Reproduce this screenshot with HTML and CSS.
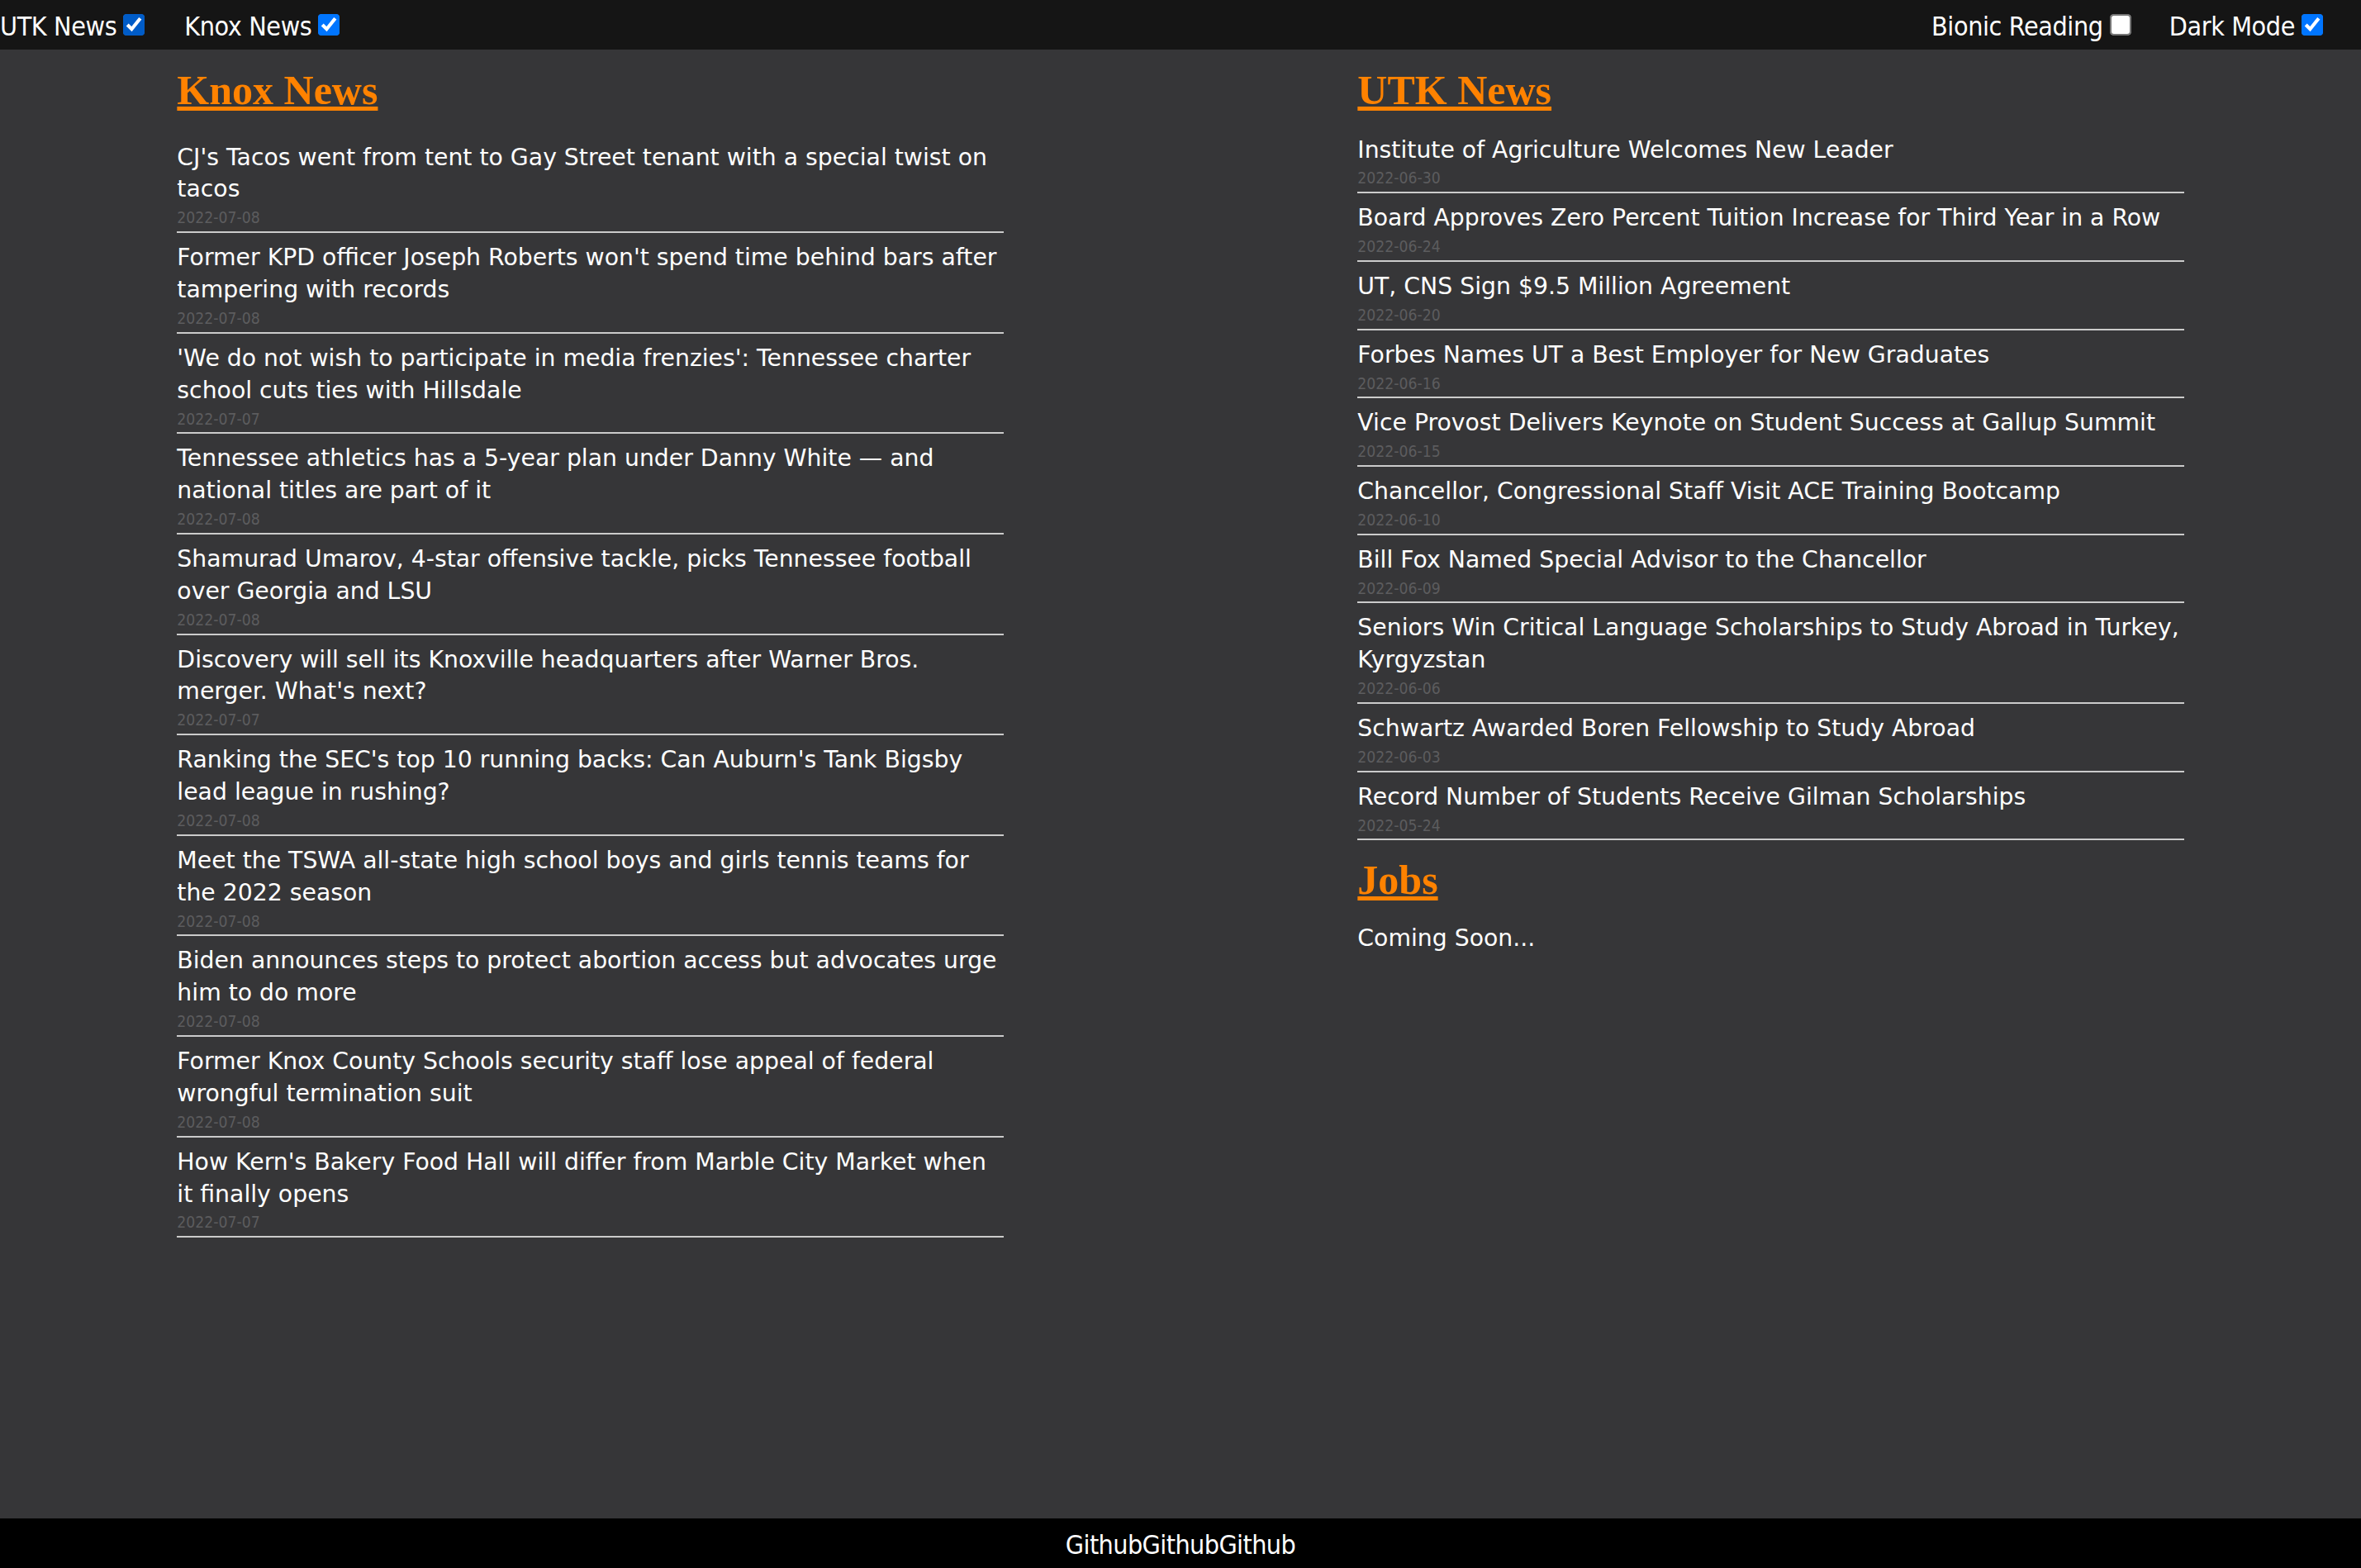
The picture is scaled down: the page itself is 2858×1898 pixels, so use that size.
FILE: index.html
```html
<!DOCTYPE html>
<html lang="en">
<head>
<meta charset="utf-8">
<title>Knoxville News</title>
<link rel="stylesheet" href="styles.css">
</head>
<body>
<nav class="topbar">
  <div class="toggles toggles-left">
    <label class="toggle"><span class="toggle-text">UTK News</span><input type="checkbox" checked></label>
    <label class="toggle"><span class="toggle-text">Knox News</span><input type="checkbox" checked></label>
  </div>
  <div class="toggles toggles-right">
    <label class="toggle"><span class="toggle-text">Bionic Reading</span><input type="checkbox"></label>
    <label class="toggle"><span class="toggle-text">Dark Mode</span><input type="checkbox" checked></label>
  </div>
</nav>
<main class="columns">
  <div class="column">
    <section class="feed">
      <h2 class="feed-title"><a href="#">Knox News</a></h2>
      <div class="feed-list feed-list-knox">
        <div class="item"><a class="item-title" href="#">CJ's Tacos went from tent to Gay Street tenant with a special twist on tacos</a><div class="item-date">2022-07-08</div></div>
        <div class="item"><a class="item-title" href="#">Former KPD officer Joseph Roberts won't spend time behind bars after tampering with records</a><div class="item-date">2022-07-08</div></div>
        <div class="item"><a class="item-title" href="#">'We do not wish to participate in media frenzies': Tennessee charter school cuts ties with Hillsdale</a><div class="item-date">2022-07-07</div></div>
        <div class="item"><a class="item-title" href="#">Tennessee athletics has a 5-year plan under Danny White — and national titles are part of it</a><div class="item-date">2022-07-08</div></div>
        <div class="item"><a class="item-title" href="#">Shamurad Umarov, 4-star offensive tackle, picks Tennessee football over Georgia and LSU</a><div class="item-date">2022-07-08</div></div>
        <div class="item"><a class="item-title" href="#">Discovery will sell its Knoxville headquarters after Warner Bros. merger. What's next?</a><div class="item-date">2022-07-07</div></div>
        <div class="item"><a class="item-title" href="#">Ranking the SEC's top 10 running backs: Can Auburn's Tank Bigsby lead league in rushing?</a><div class="item-date">2022-07-08</div></div>
        <div class="item"><a class="item-title" href="#">Meet the TSWA all-state high school boys and girls tennis teams for the 2022 season</a><div class="item-date">2022-07-08</div></div>
        <div class="item"><a class="item-title" href="#">Biden announces steps to protect abortion access but advocates urge him to do more</a><div class="item-date">2022-07-08</div></div>
        <div class="item"><a class="item-title" href="#">Former Knox County Schools security staff lose appeal of federal wrongful termination suit</a><div class="item-date">2022-07-08</div></div>
        <div class="item"><a class="item-title" href="#">How Kern's Bakery Food Hall will differ from Marble City Market when it finally opens</a><div class="item-date">2022-07-07</div></div>
      </div>
    </section>
  </div>
  <div class="column">
    <section class="feed">
      <h2 class="feed-title"><a href="#">UTK News</a></h2>
      <div class="feed-list">
        <div class="item"><a class="item-title" href="#">Institute of Agriculture Welcomes New Leader</a><div class="item-date">2022-06-30</div></div>
        <div class="item"><a class="item-title" href="#">Board Approves Zero Percent Tuition Increase for Third Year in a Row</a><div class="item-date">2022-06-24</div></div>
        <div class="item"><a class="item-title" href="#">UT, CNS Sign $9.5 Million Agreement</a><div class="item-date">2022-06-20</div></div>
        <div class="item"><a class="item-title" href="#">Forbes Names UT a Best Employer for New Graduates</a><div class="item-date">2022-06-16</div></div>
        <div class="item"><a class="item-title" href="#">Vice Provost Delivers Keynote on Student Success at Gallup Summit</a><div class="item-date">2022-06-15</div></div>
        <div class="item"><a class="item-title" href="#">Chancellor, Congressional Staff Visit ACE Training Bootcamp</a><div class="item-date">2022-06-10</div></div>
        <div class="item"><a class="item-title" href="#">Bill Fox Named Special Advisor to the Chancellor</a><div class="item-date">2022-06-09</div></div>
        <div class="item"><a class="item-title" href="#">Seniors Win Critical Language Scholarships to Study Abroad in Turkey, Kyrgyzstan</a><div class="item-date">2022-06-06</div></div>
        <div class="item"><a class="item-title" href="#">Schwartz Awarded Boren Fellowship to Study Abroad</a><div class="item-date">2022-06-03</div></div>
        <div class="item"><a class="item-title" href="#">Record Number of Students Receive Gilman Scholarships</a><div class="item-date">2022-05-24</div></div>
      </div>
    </section>
    <section class="feed feed-jobs">
      <h2 class="feed-title"><a href="#">Jobs</a></h2>
      <p class="coming">Coming Soon...</p>
    </section>
  </div>
</main>
<footer class="footer">
  <a href="#">Github</a><a href="#">Github</a><a href="#">Github</a>
</footer>
</body>
</html>
```

FILE: styles.css
```css
* { box-sizing: border-box; }

html, body {
  margin: 0;
  padding: 0;
}

body {
  min-height: 100vh;
  display: flex;
  flex-direction: column;
  background: #363638;
  color: #ffffff;
  font-family: "DejaVu Sans", "Noto Sans", sans-serif;
}

a {
  color: inherit;
  text-decoration: none;
}

/* ---------- top bar ---------- */
.topbar {
  height: 60px;
  background: #151515;
  display: flex;
  justify-content: space-between;
  padding-right: 40px;
  font-size: 32px;
  font-stretch: condensed;
  letter-spacing: -0.4px;
  color: #ffffff;
}

.toggles {
  display: flex;
  align-items: center;
}

.toggles-left { gap: 42px; }
.toggles-right { gap: 40px; }

.toggle {
  display: flex;
  align-items: center;
  height: 60px;
}

.toggle-text {
  padding-top: 3px;
  line-height: normal;
}

.toggle input {
  zoom: 2;
  margin: 3px 3px 3px 4px;
}

/* ---------- columns ---------- */
.columns {
  flex: 1;
  display: grid;
  grid-template-columns: 1fr 1fr;
  align-items: start;
}

.feed {
  width: 70%;
  margin: 0 auto;
}

.feed-title {
  margin: 20px 0 13.5px;
  font-family: "Liberation Serif", serif;
  font-weight: 700;
  font-size: 50px;
  line-height: 58px;
  color: #ff8200;
}

.feed-jobs .feed-title {
  margin-top: 18.5px;
  margin-bottom: 12px;
}

.feed-title a {
  text-decoration: underline;
  text-decoration-thickness: 5px;
  text-underline-offset: 3px;
}

.feed-list-knox {
  padding-top: 9px;
}

.item {
  padding-top: 11px;
  border-bottom: 2px solid #cbcbcb;
}

.item-title {
  display: block;
  font-size: 28.3px;
  line-height: 38.9px;
  color: #ffffff;
}

.item-date {
  font-size: 19.2px;
  font-stretch: condensed;
  line-height: 30.8px;
  color: #5c5c5e;
}

.coming {
  margin: 22px 0 0;
  font-size: 28.3px;
  line-height: 39px;
}

/* ---------- footer ---------- */
.footer {
  height: 60px;
  background: #000000;
  text-align: center;
  font-size: 32px;
  font-stretch: condensed;
  letter-spacing: -0.6px;
  line-height: 56px;
  padding-top: 4px;
}
```
